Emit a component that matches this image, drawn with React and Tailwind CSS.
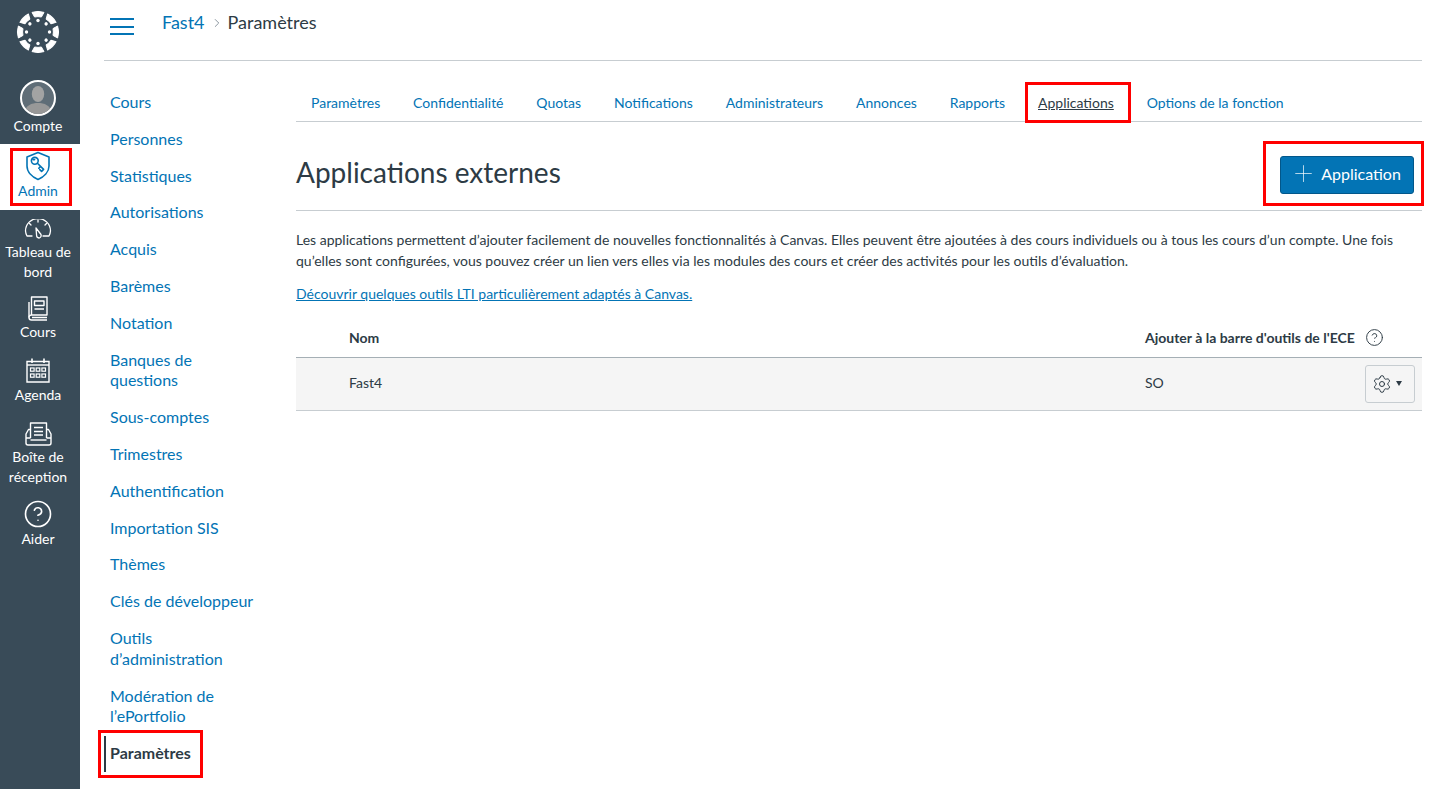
import React from 'react';
import { Plus, CircleHelp, Settings, ChevronRight } from 'lucide-react';

const COURSE_NAV = [
    'Cours', 'Personnes', 'Statistiques', 'Autorisations', 'Acquis', 'Barèmes', 'Notation',
    'Banques de questions', 'Sous-comptes', 'Trimestres', 'Authentification', 'Importation SIS',
    'Thèmes', 'Clés de développeur', 'Outils d’administration', 'Modération de l’ePortfolio',
];

const TABS = ['Paramètres', 'Confidentialité', 'Quotas', 'Notifications', 'Administrateurs', 'Annonces', 'Rapports', 'Applications', 'Options de la fonction'];

const ANGLES = [0, 45, 90, 135, 180, 225, 270, 315];

const CanvasLogo = () => (
    <svg width="44" height="44" viewBox="-22 -22 44 44" fill="#fff">
        {ANGLES.map(a => (
            <g key={a} transform={`rotate(${a})`}>
                <path d="M-6 -19.6 Q0 -21.6 6 -19.6 L3.4 -15 Q0 -15.8 -3.4 -15 Z" stroke="#fff" strokeWidth="1" strokeLinejoin="round" />
                <circle cx="0" cy="-11.5" r="1.7" />
            </g>
        ))}
    </svg>
);

const AdminIcon = () => (
    <svg width="26" height="30" viewBox="0 0 26 30" fill="none" stroke="#0374B5" strokeWidth="1.6" strokeLinejoin="round" strokeLinecap="round">
        <path d="M13 1.5 L24 6 V15 C24 21 19 26 13 28.5 C7 26 2 21 2 15 V6 Z" />
        <circle cx="9.8" cy="9.8" r="3.4" />
        <path d="M12.4 12.2 L18.6 18.4 L16.6 20.4 L14.8 18.6 M15.6 15.4 L13.8 17.2" />
        <path d="M8 8.6 L9.6 8.6" />
    </svg>
);

const DashboardIcon = () => (
    <svg width="28" height="20" viewBox="0 0 28 20" fill="none" stroke="#fff" strokeWidth="1.3" strokeLinecap="round" strokeLinejoin="round">
        <path d="M8 17 H3 A12.5 12.5 0 0 1 1.5 12 A12.5 12.5 0 0 1 26.5 12 A12.5 12.5 0 0 1 25 17 H19" />
        <path d="M12 9 L17 15.5 A2.6 2.6 0 0 1 15 19 A2.6 2.6 0 0 1 12.6 16.5 Z" />
        <path d="M14 1 V3 M5.5 4.5 L7 6 M22.5 4.5 L21 6" />
    </svg>
);

const CoursesIcon = () => (
    <svg width="20" height="25" viewBox="0 0 20 25" fill="none" stroke="#fff" strokeWidth="1.4" strokeLinejoin="round">
        <path d="M3.5 19 V1 H19 V19 H3.5 C1.5 19 1 20.5 1 21.5 C1 23 2 24 3.5 24 H19" />
        <path d="M1 21.5 V6" />
        <rect x="6.5" y="5" width="9.5" height="4.5" />
        <path d="M6.5 13 H16 M4 21.5 H19" />
    </svg>
);

const CalendarIcon = () => (
    <svg width="24" height="25" viewBox="0 0 24 25" fill="none" stroke="#fff" strokeWidth="1.4">
        <path d="M1 3.5 H23 V24 H1 Z" />
        <path d="M6 0.5 V5 M18 0.5 V5" strokeWidth="1.6" />
        <path d="M1 7 H23" />
        <g strokeWidth="1.2">
            <rect x="4.5" y="10" width="3.6" height="3.2" />
            <rect x="10.2" y="10" width="3.6" height="3.2" />
            <rect x="15.9" y="10" width="3.6" height="3.2" />
            <rect x="4.5" y="16" width="3.6" height="3.2" />
            <rect x="10.2" y="16" width="3.6" height="3.2" />
            <rect x="15.9" y="16" width="3.6" height="3.2" />
        </g>
    </svg>
);

const InboxIcon = () => (
    <svg width="27" height="24" viewBox="0 0 27 24" fill="none" stroke="#fff" strokeWidth="1.4" strokeLinejoin="round">
        <path d="M5.5 16 V1 H21.5 V16" />
        <path d="M9 5.5 H18 M9 9.5 H18 M9 13 H18" />
        <path d="M5.5 7.5 H3.5 L1 12 V21 Q1 23 3 23 H24 Q26 23 26 21 V12 L23.5 7.5 H21.5" />
        <path d="M1 16 H5.5 M21.5 16 H26" />
        <path d="M5.5 18 H21.5" />
    </svg>
);

const Avatar = () => (
    <div className="w-[36px] h-[36px] rounded-full border-2 border-white bg-[#5f6d77] overflow-hidden flex items-center justify-center">
        <svg width="32" height="32" viewBox="0 0 32 32">
            <ellipse cx="16" cy="12" rx="6.2" ry="8" fill="#a3a3a3" />
            <path d="M2 32 C3 23 10 21 16 21 C22 21 29 23 30 32 Z" fill="#989898" />
        </svg>
    </div>
);

const RedBox = ({ className }) => (
    <div className={`absolute border-[3px] border-[#f00] pointer-events-none ${className}`} />
);

const SideItem = ({ icon, label, className }) => (
    <div className={`flex flex-col items-center pr-[4px] text-white text-[14px] leading-[19.5px] text-center ${className}`}>
        {icon}
        <span>{label}</span>
    </div>
);

const App = () => (
    <div className="flex min-h-[789px] h-[789px] overflow-hidden bg-white text-[#2D3B45] font-['Lato','Noto_Sans',sans-serif]">
        {/* Global nav */}
        <div className="w-[80px] shrink-0 bg-[#394B58] flex flex-col">
            <div className="h-[80px] pt-[10px] pr-[4px] flex justify-center">
                <CanvasLogo />
            </div>
            <SideItem className="h-[64px] pt-0" icon={<Avatar />} label="Compte" />
            <div className="relative h-[66px] bg-white flex flex-col items-center pr-[4px] pt-[7px] text-[#0374B5] text-[14px] leading-[19.5px]">
                <RedBox className="left-[10px] top-[4px] w-[62px] h-[58px]" />
                <AdminIcon />
                <span>Admin</span>
            </div>
            <SideItem className="h-[80px] pt-[9px] gap-[3px]" icon={<DashboardIcon />} label={<>Tableau de<br />bord</>} />
            <SideItem className="h-[60px] pt-[6px] gap-[1px]" icon={<CoursesIcon />} label="Cours" />
            <SideItem className="h-[62px] pt-[8px] gap-[2px]" icon={<CalendarIcon />} label="Agenda" />
            <SideItem className="h-[83px] pt-[10px] gap-[1px]" icon={<InboxIcon />} label={<>Boîte de<br />réception</>} />
            <SideItem className="pt-[4px]" icon={<CircleHelp size={30} strokeWidth={1.3} />} label="Aider" />
        </div>

        <div className="flex-1 pl-[24px] pr-[33px] min-w-0">
            {/* Header */}
            <div className="h-[61px] border-b border-[#C7CDD1] flex items-start">
                <div className="ml-[6px] mt-[18px] w-[24px] flex flex-col gap-[5.5px]">
                    <div className="h-[2px] bg-[#0374B5]" />
                    <div className="h-[2px] bg-[#0374B5]" />
                    <div className="h-[2px] bg-[#0374B5]" />
                </div>
                <div className="ml-[28px] mt-[10px] flex items-center text-[18px] leading-[24px]">
                    <span className="text-[#0374B5]">Fast4</span>
                    <ChevronRight size={14} strokeWidth={1.4} className="ml-[5px] mr-[4px] mt-[2px] text-[#73818C]" />
                    <span>Paramètres</span>
                </div>
            </div>

            <div className="flex">
                {/* Section nav */}
                <div className="w-[192px] shrink-0 pt-[31px] pl-[6px] flex flex-col gap-[16px] text-[16px] leading-[20.8px] text-[#0374B5]">
                    {COURSE_NAV.map(item => (
                        <div key={item} className="w-[150px]">{item}</div>
                    ))}
                    <div className="relative font-bold text-[#2D3B45]">
                        <RedBox className="left-[-12px] top-[-13px] w-[105px] h-[48px]" />
                        <div className="absolute left-[-6px] top-[-7px] w-[2px] h-[36px] bg-[#2D3B45]" />
                        Paramètres
                    </div>
                </div>

                {/* Content */}
                <div className="flex-1 min-w-0">
                    <div className="h-[61px] border-b border-[#C7CDD1] flex items-end pl-[15px] gap-[32.85px] text-[14px] leading-[20px] text-[#0374B5]">
                        {TABS.map(tab => (
                            tab === 'Applications' ? (
                                <div key={tab} className="relative pb-[8px] text-[#2D3B45] underline">
                                    <RedBox className="left-[-13px] top-[-11px] w-[106px] h-[41px]" />
                                    {tab}
                                </div>
                            ) : (
                                <div key={tab} className="pb-[8px]">{tab}</div>
                            )
                        ))}
                    </div>

                    <div className="h-[89px] border-b border-[#C7CDD1] flex items-center justify-between">
                        <h1 className="text-[28px] leading-[36px] font-normal mt-[11px]">Applications externes</h1>
                        <div className="relative mr-[8px] mt-[17px] h-[38px] w-[134px] pr-[3px] pb-[2px] rounded-[3px] bg-[#0374B5] border border-[#02578A] flex items-center justify-center gap-[4px] text-white text-[16px]">
                            <RedBox className="left-[-18px] top-[-16px] w-[161px] h-[65px]" />
                            <Plus size={27} strokeWidth={0.9} className="text-white/70" />
                            <span>Application</span>
                        </div>
                    </div>

                    <p className="mt-[18px] text-[14px] leading-[21px]">
                        Les applications permettent d’ajouter facilement de nouvelles fonctionnalités à Canvas. Elles peuvent être ajoutées à des cours individuels ou à tous les cours d’un compte. Une fois qu’elles sont configurées, vous pouvez créer un lien vers elles via les modules des cours et créer des activités pour les outils d’évaluation.
                    </p>
                    <p className="mt-[12px] text-[14px] leading-[21px] text-[#0374B5] underline">
                        Découvrir quelques outils LTI particulièrement adaptés à Canvas.
                    </p>

                    {/* Table */}
                    <div className="mt-[14px] h-[40px] border-b border-[#A5AFB5] flex items-center text-[14px] font-bold">
                        <div className="pl-[53px] w-[849px]">Nom</div>
                        <div>Ajouter à la barre d'outils de l'ECE</div>
                        <CircleHelp size={19} strokeWidth={1.2} className="ml-[10px]" />
                    </div>
                    <div className="h-[53px] bg-[#F5F5F5] border-b border-[#C7CDD1] flex items-center text-[14px]">
                        <div className="pl-[53px] w-[849px] mb-[3px]">Fast4</div>
                        <div className="flex-1 mb-[3px]">SO</div>
                        <div className="mr-[7px] w-[50px] h-[38px] pr-[6px] pb-[1px] rounded-[3px] border border-[#C7CDD1] bg-[#F5F5F5] flex items-center justify-center gap-[4px]">
                            <Settings size={20} strokeWidth={1.2} />
                            <span className="w-0 h-0 border-x-[3.5px] border-x-transparent border-t-[5px] border-t-[#2D3B45]" />
                        </div>
                    </div>
                </div>
            </div>
        </div>
    </div>
);

export default App;
